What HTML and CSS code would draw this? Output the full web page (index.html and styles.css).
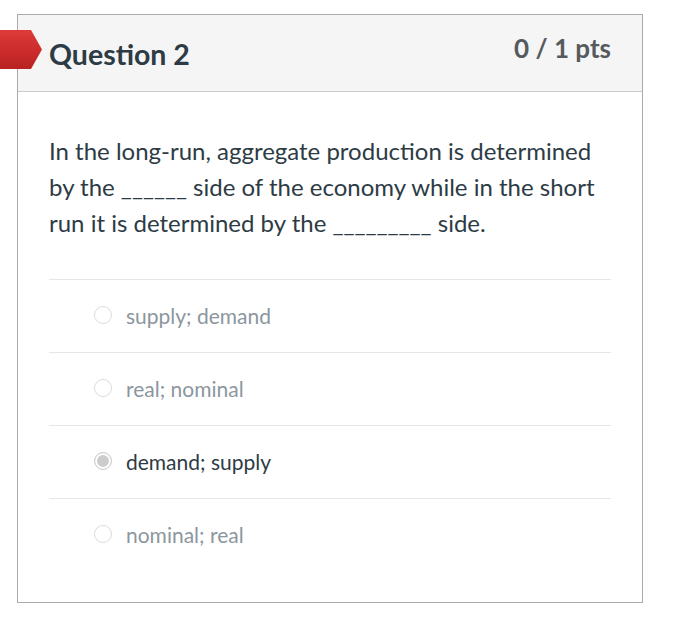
FILE: index.html
```html
<!DOCTYPE html>
<html>
<head>
<meta charset="utf-8">
<link rel="stylesheet" href="styles.css">
</head>
<body>
<div class="card">
  <div class="flag"></div>
  <div class="header">
    <h2 class="title">Question 2</h2>
    <div class="pts">0 / 1 pts</div>
  </div>
  <div class="body">
    <p class="question">In the long-run, aggregate production is determined by the ______ side of the economy while in the short run it is determined by the _________ side.</p>
    <div class="answers">
      <div class="answer"><span class="radio"></span><span class="label">supply; demand</span></div>
      <div class="answer"><span class="radio"></span><span class="label">real; nominal</span></div>
      <div class="answer selected"><span class="radio checked"></span><span class="label">demand; supply</span></div>
      <div class="answer"><span class="radio"></span><span class="label">nominal; real</span></div>
    </div>
  </div>
</div>
</body>
</html>
```
FILE: styles.css
```css
html, body {
  margin: 0;
  padding: 0;
  background: #ffffff;
  font-family: "Lato", "Open Sans", sans-serif;
}
.card {
  position: relative;
  margin: 14px 0 0 17px;
  width: 624px;
  height: 587px;
  border: 1px solid #aaaaaa;
  box-sizing: content-box;
}
.flag {
  position: absolute;
  left: -18px;
  top: 15px;
  width: 42px;
  height: 39px;
  background: linear-gradient(to bottom, #de3a3a 0%, #c92a2a 60%, #b82222 100%);
  clip-path: polygon(0 0, 31px 0, 42px 50%, 31px 100%, 0 100%);
}
.header {
  display: flex;
  justify-content: space-between;
  align-items: flex-start;
  height: 76px;
  background: #f5f5f5;
  border-bottom: 1px solid #c7cdd1;
  padding: 0 31px 0 31px;
}
.title {
  margin: 22px 0 0 0;
  font-size: 28.5px;
  font-weight: bold;
  color: #2d3b45;
  line-height: 34px;
}
.pts {
  margin-top: 18px;
  font-size: 26px;
  font-weight: bold;
  color: #555a5e;
  line-height: 30px;
}
.body {
  padding: 41px 31px 0 31px;
}
.question {
  margin: 0 0 38px 0;
  font-size: 24px;
  line-height: 36px;
  color: #2d3b45;
}
.answers {
  display: flex;
  flex-direction: column;
}
.answer {
  display: flex;
  align-items: center;
  height: 72px;
  border-top: 1px solid #e6e6e6;
  padding-left: 45px;
}
.radio {
  width: 16px;
  height: 16px;
  border: 1px solid #dcdcdc;
  border-radius: 50%;
  background: #ffffff;
  box-sizing: content-box;
  margin-right: 14px;
  margin-top: -2px;
}
.radio.checked {
  background: #cccccc;
  box-shadow: inset 0 0 0 2px #ffffff;
  border-color: #cfcfcf;
}
.label {
  font-size: 21px;
  color: #8b969e;
  margin-top: -2px;
}
.answer.selected .label {
  color: #2d3b45;
}
```
